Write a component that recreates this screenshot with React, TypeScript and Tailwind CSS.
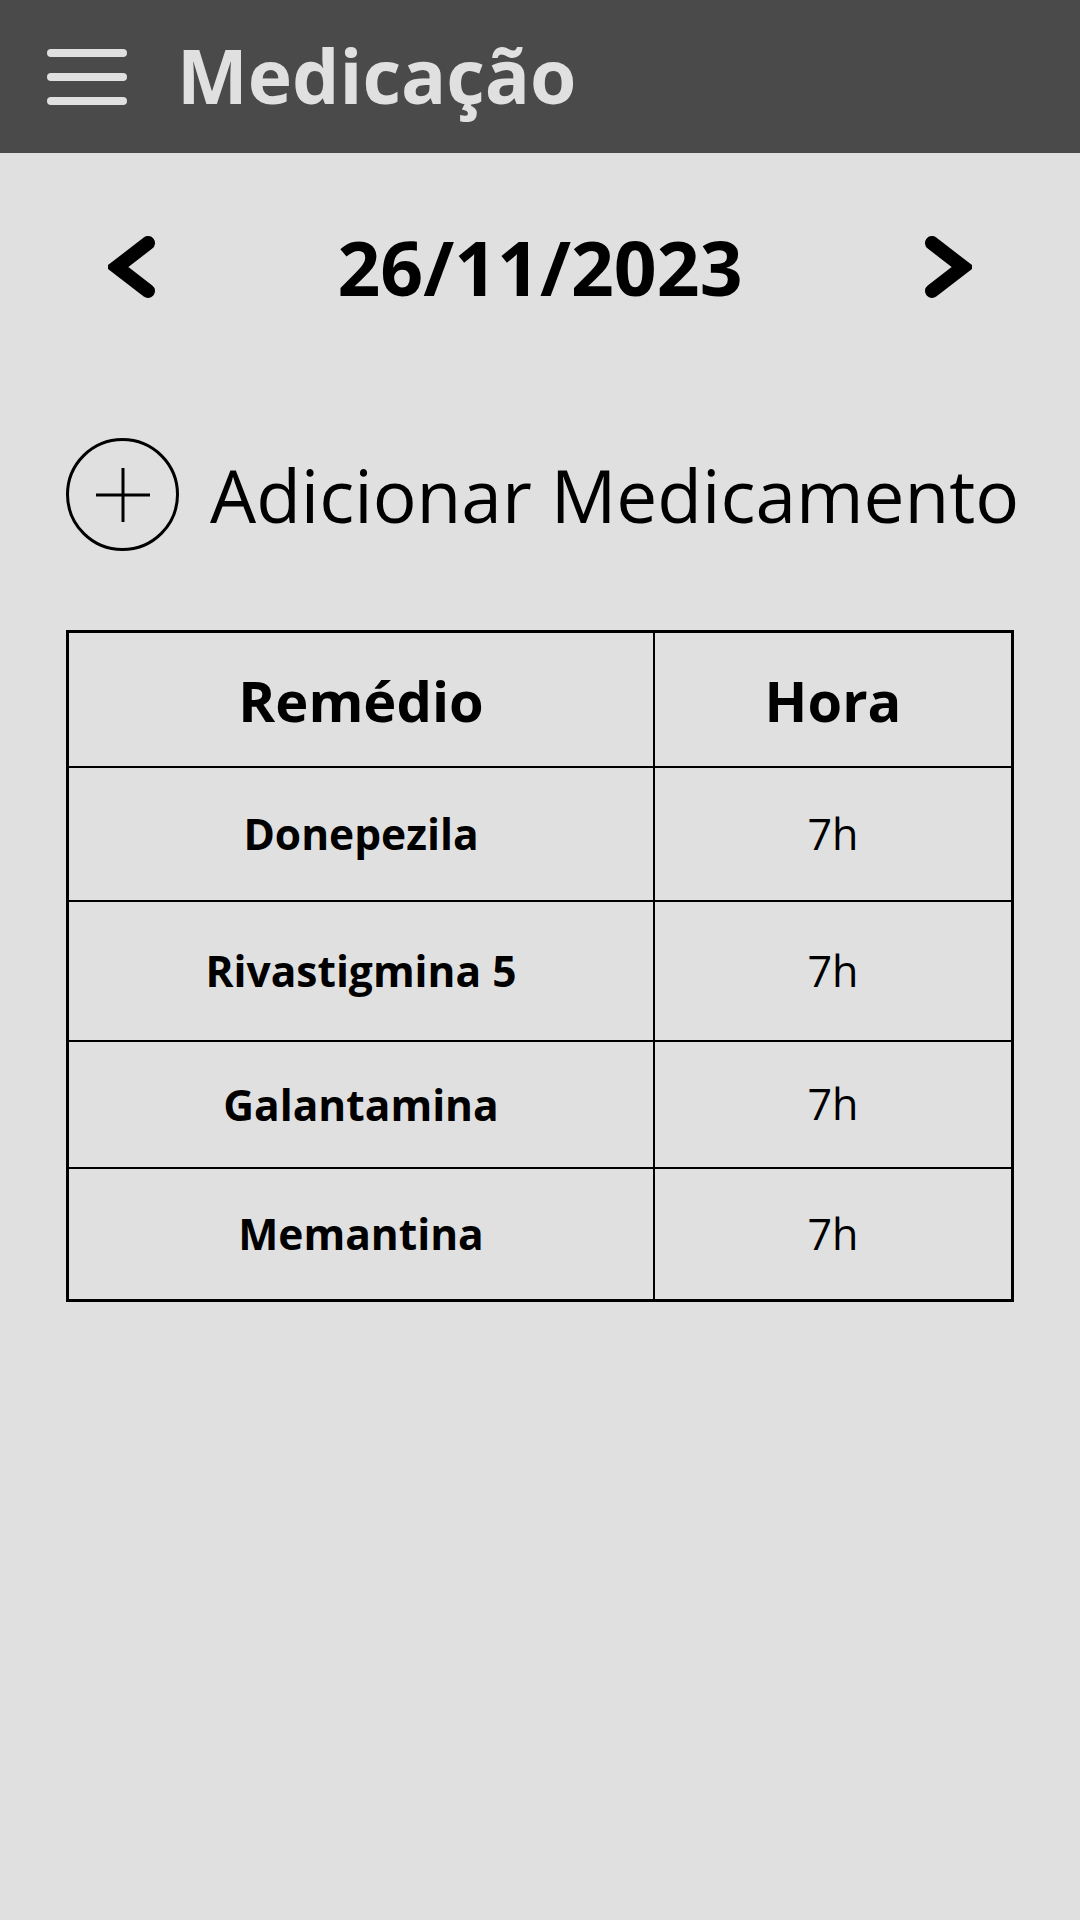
const rows = [
  { name: "Donepezila", time: "7h", h: "h-[134px]" },
  { name: "Rivastigmina 5", time: "7h", h: "h-[140px]" },
  { name: "Galantamina", time: "7h", h: "h-[127px]" },
  { name: "Memantina", time: "7h", h: "h-[132px]" },
];

function Chevron({ flip }: { flip?: boolean }) {
  return (
    <svg width="48" height="66" viewBox="0 0 48 66" className={flip ? "scale-x-[-1]" : ""}>
      <polyline
        points="40,9 9,33 40,57"
        fill="none"
        stroke="#000"
        strokeWidth="14"
        strokeLinecap="round"
        strokeLinejoin="miter"
      />
    </svg>
  );
}

export default function App() {
  return (
    <div className="min-h-[1920px] w-[1080px] bg-[#e0e0e0] font-['Open_Sans',sans-serif] text-black">
      {/* ── Top bar ─────────────────────────── */}
      <header className="h-[153px] bg-[#4a4a4a] flex items-center pl-[47px]">
        <div className="flex flex-col gap-[16px] w-[80px]">
          <span className="block h-[8px] rounded-full bg-[#e0e0e0]" />
          <span className="block h-[8px] rounded-full bg-[#e0e0e0]" />
          <span className="block h-[8px] rounded-full bg-[#e0e0e0]" />
        </div>
        <h1 className="ml-[50px] text-[75px] font-bold leading-none text-[#e0e0e0] -mt-[2px]">
          Medicação
        </h1>
      </header>

      {/* ── Date picker ─────────────────────── */}
      <div className="mt-[62px] h-[104px] flex items-center justify-between px-[108px]">
        <Chevron />
        <span className="text-[75px] font-bold leading-none">26/11/2023</span>
        <Chevron flip />
      </div>

      {/* ── Add button ──────────────────────── */}
      <div className="mt-[119px] flex items-center pl-[66px] gap-[31px]">
        <div className="w-[113px] h-[113px] rounded-full border-[3px] border-black relative shrink-0">
          <span className="absolute left-1/2 top-1/2 w-[54px] h-[3px] -translate-x-1/2 -translate-y-1/2 bg-black" />
          <span className="absolute left-1/2 top-1/2 w-[3px] h-[54px] -translate-x-1/2 -translate-y-1/2 bg-black" />
        </div>
        <span className="text-[73px] leading-none whitespace-nowrap">Adicionar Medicamento</span>
      </div>

      {/* ── Table ───────────────────────────── */}
      <div className="mt-[79px] mx-[66px] border-[3px] border-black">
        <div className="h-[133px] grid grid-cols-[586px_1fr]">
          <div className="border-r-2 border-black flex items-center justify-center text-[56px] font-bold">
            Remédio
          </div>
          <div className="flex items-center justify-center text-[56px] font-bold">Hora</div>
        </div>
        {rows.map((r) => (
          <div key={r.name} className={`${r.h} grid grid-cols-[586px_1fr] border-t-2 border-black`}>
            <div className="border-r-2 border-black flex items-center justify-center text-[42.5px] font-bold">
              {r.name}
            </div>
            <div className="flex items-center justify-center text-[43px]">{r.time}</div>
          </div>
        ))}
      </div>
    </div>
  );
}
